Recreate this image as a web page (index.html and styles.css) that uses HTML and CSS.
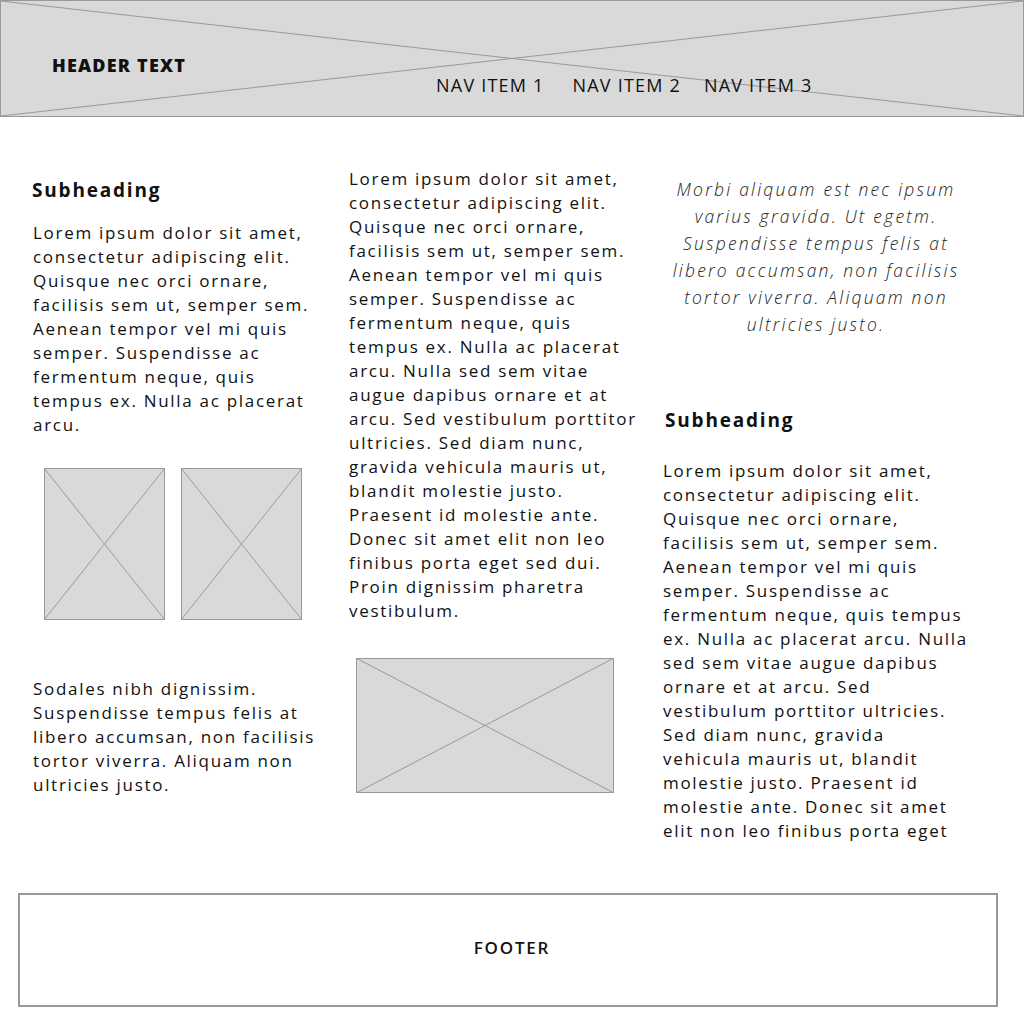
FILE: index.html
```html
<!DOCTYPE html>
<html lang="en">
<head>
  <meta charset="UTF-8" />
  <meta name="viewport" content="width=device-width, initial-scale=1.0"/>
  <title>Wireframe</title>
  <link rel="stylesheet" href="styles.css">
</head>

<body>
  <header class="site-header">
    <svg class="cross" viewBox="0 0 100 100" preserveAspectRatio="none">
      <line x1="0" y1="0" x2="100" y2="100" />
      <line x1="0" y1="100" x2="100" y2="0" />
    </svg>
    <div class="brand">HEADER TEXT</div>
    <nav class="main-nav">
      <a href="#">NAV ITEM 1</a>
      <a href="#">NAV ITEM 2</a>
      <a href="#">NAV ITEM 3</a>
    </nav>
  </header>

  <main class="columns">
    <section class="col col-left">
      <h2>Subheading</h2>
      <p>Lorem ipsum dolor sit amet, consectetur adipiscing elit. Quisque nec orci ornare, facilisis sem ut, semper sem. Aenean tempor vel mi quis semper. Suspendisse ac fermentum neque, quis tempus ex. Nulla ac placerat arcu.</p>

      <div class="thumbs">
        <svg class="placeholder thumb" viewBox="0 0 100 100" preserveAspectRatio="none">
          <rect x="0" y="0" width="100" height="100" />
          <line x1="0" y1="0" x2="100" y2="100" />
          <line x1="0" y1="100" x2="100" y2="0" />
        </svg>
        <svg class="placeholder thumb" viewBox="0 0 100 100" preserveAspectRatio="none">
          <rect x="0" y="0" width="100" height="100" />
          <line x1="0" y1="0" x2="100" y2="100" />
          <line x1="0" y1="100" x2="100" y2="0" />
        </svg>
      </div>

      <p>Sodales nibh dignissim. Suspendisse tempus felis at libero accumsan, non facilisis tortor viverra. Aliquam non ultricies justo.</p>
    </section>

    <section class="col col-middle">
      <p>Lorem ipsum dolor sit amet, consectetur adipiscing elit. Quisque nec orci ornare, facilisis sem ut, semper sem. Aenean tempor vel mi quis semper. Suspendisse ac fermentum neque, quis tempus ex. Nulla ac placerat arcu. Nulla sed sem vitae augue dapibus ornare et at arcu. Sed vestibulum porttitor ultricies. Sed diam nunc, gravida vehicula mauris ut, blandit molestie justo. Praesent id molestie ante. Donec sit amet elit non leo finibus porta eget sed dui. Proin dignissim pharetra vestibulum.</p>

      <svg class="placeholder wide" viewBox="0 0 100 100" preserveAspectRatio="none">
        <rect x="0" y="0" width="100" height="100" />
        <line x1="0" y1="0" x2="100" y2="100" />
        <line x1="0" y1="100" x2="100" y2="0" />
      </svg>
    </section>

    <section class="col col-right">
      <p class="quote">Morbi aliquam est nec ipsum varius gravida. Ut egetm. Suspendisse tempus felis at libero accumsan, non facilisis tortor viverra. Aliquam non ultricies justo.</p>
      <h2>Subheading</h2>
      <p class="clipped">Lorem ipsum dolor sit amet, consectetur adipiscing elit. Quisque nec orci ornare, facilisis sem ut, semper sem. Aenean tempor vel mi quis semper. Suspendisse ac fermentum neque, quis tempus ex. Nulla ac placerat arcu. Nulla sed sem vitae augue dapibus ornare et at arcu. Sed vestibulum porttitor ultricies. Sed diam nunc, gravida vehicula mauris ut, blandit molestie justo. Praesent id molestie ante. Donec sit amet elit non leo finibus porta eget</p>
    </section>
  </main>

  <footer class="site-footer">FOOTER</footer>
</body>
</html>
```

FILE: styles.css
```css
body {
  margin: 0;
  font-family: "Open Sans", "Liberation Sans", sans-serif;
  color: #111;
  background: #fff;
}
.site-header {
  position: relative;
  box-sizing: border-box;
  height: 117px;
  background: #d9d9d9;
  border: 1px solid #999;
  display: flex;
  align-items: flex-start;
  padding-left: 51px;
}
.cross {
  position: absolute;
  top: 0;
  left: 0;
  width: 100%;
  height: 100%;
}
.cross line,
.placeholder line {
  stroke: #999;
  stroke-width: 1;
  vector-effect: non-scaling-stroke;
}
.brand {
  position: relative;
  margin-top: 52px;
  font-size: 18px;
  line-height: 24px;
  font-weight: 800;
  letter-spacing: 1.2px;
}
.main-nav {
  position: relative;
  display: flex;
  gap: 28px;
  margin-top: 72px;
  margin-left: 250px;
}
.main-nav a {
  color: #111;
  text-decoration: none;
  font-size: 18px;
  line-height: 24px;
  letter-spacing: 1.2px;
}
.main-nav a:last-child {
  margin-left: -5px;
}
.columns {
  display: grid;
  grid-template-columns: 316px 314px 306px;
  padding-left: 33px;
  margin-top: 55px;
}
.col-left {
  padding-right: 20px;
}
.col-middle {
  padding-right: 20px;
}
.col p {
  margin: 0;
  font-size: 17px;
  line-height: 24px;
  letter-spacing: 1.7px;
}
.col h2 {
  margin: 0;
  font-size: 19px;
  line-height: 24px;
  font-weight: 700;
  letter-spacing: 1.8px;
}
.col-left h2 {
  margin: 6px 0 19px -1px;
}
.thumbs {
  display: flex;
  gap: 16px;
  margin: 31px 0 57px 11px;
}
.placeholder rect {
  fill: #d9d9d9;
  stroke: #999;
  stroke-width: 2;
  vector-effect: non-scaling-stroke;
}
.placeholder {
  display: block;
}
.thumb {
  width: 121px;
  height: 152px;
}
.col-middle p {
  margin-top: -5px;
}
.wide {
  width: 258px;
  height: 135px;
  margin: 35px 0 0 7px;
}
.col .quote {
  color: #222;
  font-style: italic;
  font-weight: 300;
  text-align: center;
  font-size: 17.5px;
  line-height: 27px;
  letter-spacing: 2.2px;
  margin: 4px 0 0 0;
  padding: 0 3px 0 3px;
}
.col-right h2 {
  margin: 70px 0 27px 2px;
}
.clipped {
  height: 384px;
  overflow: hidden;
}
.site-footer {
  box-sizing: border-box;
  margin: 50px 26px 0 18px;
  height: 114px;
  padding: 0 0 5px 8px;
  border: 2px solid #999;
  display: flex;
  align-items: center;
  justify-content: center;
  font-size: 17px;
  font-weight: 600;
  letter-spacing: 1.8px;
}
```
